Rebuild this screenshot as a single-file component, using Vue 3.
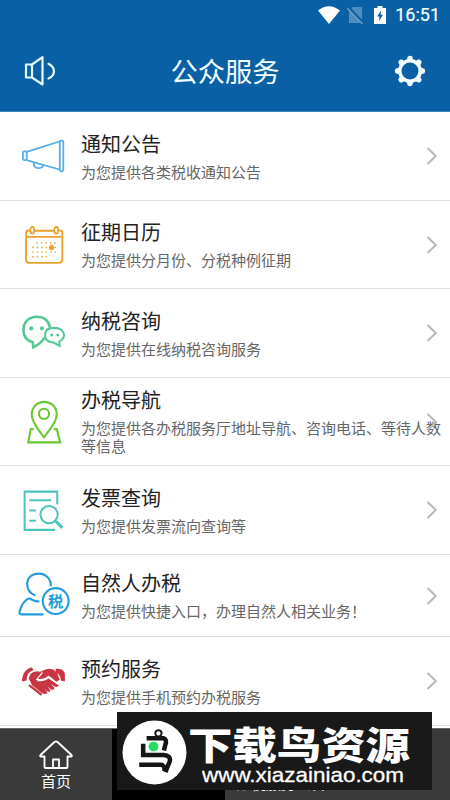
<script setup>
const rows = [
  { icon: 'horn', title: '通知公告', text: '为您提供各类税收通知公告', h: 89 },
  { icon: 'calendar', title: '征期日历', text: '为您提供分月份、分税种例征期', h: 88 },
  { icon: 'chat', title: '纳税咨询', text: '为您提供在线纳税咨询服务', h: 89 },
  { icon: 'pin', title: '办税导航', text: '为您提供各办税服务厅地址导航、咨询电话、等待人数等信息', h: 88 },
  { icon: 'invoice', title: '发票查询', text: '为您提供发票流向查询等', h: 89 },
  { icon: 'person', title: '自然人办税', text: '为您提供快捷入口，办理自然人相关业务！', h: 82 },
  { icon: 'hands', title: '预约服务', text: '为您提供手机预约办税服务', h: 89 },
]
</script>

<template>
  <div class="screen">
    <header class="header">
      <div class="status">
        <svg class="wifi" viewBox="0 0 22 18"><path d="M0 4.5Q11-4 22 4.5L11 18Z" fill="#fff" /></svg>
        <svg class="sim" viewBox="0 0 18 18"><path d="M6 1H15V17H2V5Z" fill="#4f8dbf" /><path d="M1 1L17 18" stroke="#0a60a5" stroke-width="3" /><path d="M0 2L15.500 18" stroke="#6ea1ca" stroke-width="1.300" /></svg>
        <svg class="battery" viewBox="0 0 12 18"><path d="M3.500 0H8.500V2H12V18H0V2H3.500Z" fill="#fff" /><path d="M7 4.500L3 10.500H5.500L5 15L9 8.700H6.500Z" fill="#0a60a5" /></svg>
        <span class="time">16:51</span>
      </div>
      <div class="bar">
        <svg class="speaker" viewBox="0 0 32 32" fill="none" stroke="#e4fbff" stroke-width="2.200" stroke-linejoin="round" stroke-linecap="round"><path d="M2 9.500H8V22.500H2ZM8 9.500L18.500 2.200V29.500L8 22.500" /><path d="M24.500 8.800C32 13 31.500 20.500 24.500 23.500" /></svg>
        <h1>公众服务</h1>
        <svg class="gear" viewBox="-16 -16 32 32"><g fill="#f2fdff"><path v-for="n in 8" :key="n" d="M-3.400-10.500L-2.200-14.500Q0-16 2.200-14.500L3.400-10.500Z" :transform="`rotate(${n * 45})`" /></g><circle r="10.200" fill="none" stroke="#f2fdff" stroke-width="3.400" /></svg>
      </div>
    </header>

    <main>
      <section v-for="row in rows" :key="row.icon" class="row" :style="{ height: row.h + 'px' }">
        <div class="icon">
          <svg v-if="row.icon === 'horn'" viewBox="0 0 52 48" fill="none" stroke="#52ade8" stroke-width="1.700" stroke-linejoin="round"><path d="M8.500 19.500L41.500 9M8.500 27.500L41.500 37" /><rect x="4.800" y="19" width="3.800" height="8.500" rx="1.200" /><rect x="41" y="8.500" width="3.500" height="30" rx="1.500" /><path d="M15.500 30V31C15.500 36.500 24 36.500 25 32.500" /></svg>
          <svg v-else-if="row.icon === 'calendar'" viewBox="0 0 52 48" fill="none" stroke="#eba12b" stroke-width="1.800"><path d="M11.500 9.500H9Q8 9.500 8 11V38Q8 41 11 41H40Q43.500 41 43.500 38V11Q43.500 9.500 42 9.500H40.500M16.500 9.500H35.500M8 15.500H43.500" /><ellipse cx="14" cy="9" rx="1.900" ry="3.300" /><ellipse cx="37.500" cy="9" rx="1.900" ry="3.300" /><path d="M18 21.500H39M14 26H39M14 30.500H39M14 35H30" stroke-width="1.400" stroke-dasharray="1.400 3" /><circle cx="33" cy="26" r="2.600" fill="#eba12b" stroke="none" /></svg>
          <svg v-else-if="row.icon === 'chat'" viewBox="0 0 52 48" fill="none" stroke="#56c896" stroke-width="2.500"><path d="M31.500 18C30 11 25 7.500 18.500 7.500C9 7.500 5.300 14.500 5.300 20.500C5.300 27 9 31 14.500 32.500L15 37.500C20 35 24 31.500 26 28" /><path d="M35 18.500C29 18.500 26.500 21.500 26.500 25.500C26.500 30 29 32.500 34.500 32.800L41 36L40.500 32C49 27 45 18.500 35 18.500Z" stroke-width="2" /><g fill="#56c896" stroke="none"><circle cx="13" cy="19" r="2" /><circle cx="23.500" cy="19" r="2" /><circle cx="33" cy="25.500" r="1.500" /><circle cx="39" cy="25.500" r="1.500" /></g></svg>
          <svg v-else-if="row.icon === 'pin'" viewBox="0 0 52 48" fill="none" stroke="#66c82a" stroke-width="2"><path d="M25.500 38.500C22 33 13.500 25 13.500 16.500C13.500 -.5 38 -.5 38 16.500C38 25 29 33 25.500 38.500Z" /><circle cx="25.500" cy="15.500" r="5" /><path d="M15.500 30.500H12.500L10 43.500H41.500L38 30.500H35" /></svg>
          <svg v-else-if="row.icon === 'invoice'" viewBox="0 0 52 48" fill="none" stroke="#4cc4bd" stroke-width="2"><path d="M38.500 18V5.500H6.500V43H36.500M11 14H32.500M11 24H17.500M11 34H17.500" /><circle cx="30.500" cy="28" r="8.500" /><path d="M37 34.500L43.500 41" stroke-width="3" /></svg>
          <svg v-else-if="row.icon === 'person'" viewBox="0 0 52 48" fill="none" stroke="#239cda" stroke-width="2.100"><path d="M17 23C12 21 9 17 9 12C9 5 14 1.500 20.500 1.500C28 1.500 33 8 32 14M11.500 25.500C5 28 3 33 1.500 39Q1 41.500 3 41.500H25M11.500 25.500Q14 28.500 21 29" /><circle cx="37" cy="28.500" r="12.700" fill="#fff" /><text x="37" y="34" text-anchor="middle" fill="#239cda" stroke="none">税</text></svg>
          <svg v-else viewBox="0 0 52 48"><g fill="#c83543"><path d="M4 22C5 15 8 11.500 13.500 10L15.500 13C10.500 14 8.500 18 8.500 23L4 24ZM37 11.500Q46 10.500 46 18V24L42 23Q42 17 37 15.500Z" /><path d="M10.500 21Q12 14 19 14Q23 15 25 13Q31 10 36 13Q39 16 41 22L37 25L30 18.500Q26 22 18.500 22L19.500 24Q26 24 30 21L40 28Q39 30 36 29L32 26.500L36 30.500Q35 33 32 31.500L29 29L32 33Q31 35 28 33L26 31L29 35Q26 38 22 34L14 28Z" /></g><path d="M24 15L18.500 22Q26 23 30 19L39 26" fill="none" stroke="#fff" stroke-width="1.300" /><path d="M11.500 28L22.500 36.500" stroke="#c83543" stroke-width="2.200" stroke-linecap="round" /></svg>
        </div>
        <div class="copy"><h2>{{ row.title }}</h2><p>{{ row.text }}</p></div>
        <svg class="arrow" viewBox="0 0 12 20"><path d="M1.500 2L9.800 10L1.500 18" fill="none" stroke="#b8b8b8" stroke-width="2" /></svg>
      </section>
    </main>

    <nav>
      <div class="tab">
        <svg class="home" viewBox="0 0 34 30" fill="none" stroke="#fff" stroke-width="1.800" stroke-linejoin="round"><path d="M5.500 16.500H1.500Q.5 16 2 14.500L15.500 2Q17 .8 18.500 2L32 14.500Q33.500 16 32.500 16.500H28.500V27Q28.500 28 27.500 28H6.500Q5.500 28 5.500 27ZM14 28V19.500H20V28" /></svg>
        <span>首页</span>
      </div>
      <div class="tab active"><span>公众服务</span></div>
      <div class="tab wide"><span>办税服务公告</span></div>
    </nav>

    <aside class="banner">
      <svg class="bird" viewBox="0 0 66 66"><circle cx="33" cy="33" r="32.500" fill="#fff" /><g fill="none" stroke="#151515" stroke-width="4.600"><path d="M25 18.500H42Q46 20 44 25L42.500 31" /><path d="M21.500 24V35.500H42Q50 36 48.500 42L44 53" /><path d="M17.500 45.500H39Q44 45.500 43 52" /></g><circle cx="37" cy="13.500" r="3.200" fill="none" stroke="#151515" stroke-width="2" /><circle cx="32" cy="27" r="5" fill="#25dc5e" /></svg>
      <div class="brand">
        <svg class="name" viewBox="0 0 226 36"><text x="0" y="33" textLength="222" lengthAdjust="spacingAndGlyphs">下载鸟资源</text></svg>
        <svg class="url" viewBox="0 0 206 24"><text x="0" y="19" textLength="202" lengthAdjust="spacingAndGlyphs">www.xiazainiao.com</text></svg>
      </div>
    </aside>
  </div>
</template>

<style>
body { margin: 0; }
</style>
<style scoped>
.screen { position: relative; width: 450px; height: 800px; overflow: hidden; background: #fff; font-family: "Noto Sans CJK SC", sans-serif; display: flex; flex-direction: column; }
.screen * { box-sizing: border-box; }
svg { display: block; }
.header { height: 112px; flex: none; background: #0a60a5; color: #f2fdff; border-bottom: 1px solid #3987bd; }
.status { height: 31px; padding: 0 10px 1px 0; display: flex; align-items: center; justify-content: flex-end; }
.wifi { width: 22px; height: 18px; margin-right: 7px; }
.sim { width: 18px; height: 18px; margin-right: 9px; }
.battery { width: 12px; height: 18px; margin-right: 9px; }
.time { font: 400 18px/30px Roboto, sans-serif; -webkit-text-stroke: .2px #fff; }
.bar { height: 80px; padding: 0 24px; display: flex; align-items: center; justify-content: space-between; }
.speaker, .gear { width: 32px; height: 32px; }
h1 { margin: 0; font-size: 27.3px; font-weight: 400; line-height: 40px; padding-bottom: 2px; }
main { flex: 1; }
.row { display: flex; align-items: center; padding: 0 8px 0 18px; border-bottom: 1px solid #dfdfdf; }
.icon { width: 53px; height: 48px; flex: none; }
.icon svg { width: 53px; height: 49px; overflow: visible; }
.icon text { font-size: 15px; font-weight: 700; }
.copy { flex: none; width: 360px; margin-left: 10px; padding-bottom: 3px; }
h2 { margin: 0; font-size: 20px; font-weight: 400; line-height: 30px; color: #222; }
p { margin: 4px 0 0; font-size: 15px; line-height: 18px; color: #666; }
.arrow { width: 12px; height: 20px; flex: none; margin-left: -15px; }
nav { height: 72px; flex: none; display: flex; background: #3a3a3a; color: #fff; border-top: 1px solid #666; }
.tab { width: 112px; padding-top: 11px; display: flex; flex-direction: column; align-items: center; font-size: 15px; line-height: 22px; }
.home { width: 34px; height: 30px; }
.active { background: #000; color: #1b559c; width: 113px; justify-content: flex-end; padding-bottom: 7px; }
.wide { justify-content: flex-end; padding-bottom: 6px; }
.banner { position: absolute; left: 117px; top: 712px; width: 315px; height: 78px; background: #191919; padding: 8px 0 0 5px; display: flex; }
.bird { width: 65px; height: 65px; flex: none; }
.brand { padding: 6px 0 0 1px; }
.name { width: 226px; height: 36px; fill: #fff; font-size: 38px; font-weight: 900; overflow: visible; }
.url { width: 206px; height: 24px; margin: 1px 0 0 14px; fill: #fff; font-family: "Liberation Sans", sans-serif; font-size: 21px; }
.url text { stroke: #fff; stroke-width: .3; }
</style>
